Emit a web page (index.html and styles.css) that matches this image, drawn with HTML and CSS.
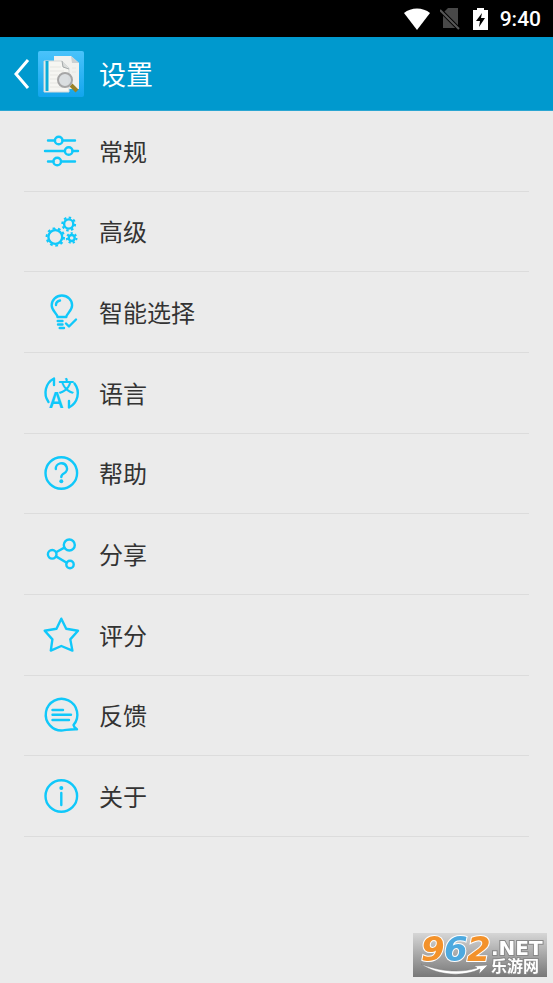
FILE: index.html
```html
<!DOCTYPE html>
<html lang="zh-CN">
<head>
<meta charset="utf-8">
<meta name="viewport" content="width=device-width, initial-scale=1">
<title>设置</title>
<link rel="stylesheet" href="styles.css">
</head>
<body>
<div class="status-bar">
  <svg class="wifi" viewBox="0 0 28 22" aria-hidden="true"><path d="M1 5C8-1 20-1 27 5L14 22Z" fill="#fff"/></svg>
  <svg class="sim" viewBox="0 0 20 22" aria-hidden="true"><path d="M8 0H18V20H3V5Z" fill="#484848"/><path d="M0 2L19 21" stroke="#000" stroke-width="4"/><path d="M0 2L19 21" stroke="#585858" stroke-width="2"/></svg>
  <svg class="battery" viewBox="0 0 15 22" aria-hidden="true"><path d="M0 2H4V0H11V2H15V22H0Z" fill="#fff"/><path d="M9 5L3 13H7L6 19L12 10H8Z" fill="#000"/></svg>
  <span class="time">9:40</span>
</div>
<header class="app-bar">
  <a class="back" href="#" aria-label="返回">
    <svg class="chevron" viewBox="0 0 16 30" aria-hidden="true"><path d="M14 1L2 15L14 29" fill="none" stroke="#fff" stroke-width="3"/></svg>
    <svg class="logo" viewBox="0 0 46 46" aria-hidden="true">
      <defs><linearGradient id="tile" x2="0" y2="1"><stop stop-color="#4ac3fb"/><stop offset="1" stop-color="#12a5ed"/></linearGradient></defs>
      <rect width="46" height="46" rx="2" fill="url(#tile)"/>
      <path d="M16 5H33L41 12V38H16Z" fill="#f1f1ee"/>
      <path d="M33 5L34 12H41Z" fill="#cbd0d2"/>
      <path d="M6 10H24L31 17V41H6Z" fill="#f6f6f2" stroke="#d5d9d9"/>
      <path d="M9 10V40" stroke="#0aacd8" stroke-width="3"/>
      <path d="M24 10L25 16L31 18" fill="#d8dad8" stroke="#a5aaaa"/>
      <path d="M12 16H23M12 20H26M12 24H20M12 28H20M12 32H22M12 36H27M34 17H38M34 21H38" stroke="#e6e6e2"/>
      <path d="M33 34L39 40" stroke="#9a8226" stroke-width="4"/>
      <circle cx="27" cy="29" r="7" fill="#d5d9dd" fill-opacity=".85" stroke="#a6a6a6" stroke-width="2"/>
    </svg>
  </a>
  <h1 class="title">设置</h1>
</header>
<main>
  <ul class="menu">
    <li><a href="#"><svg viewBox="0 0 40 40" aria-hidden="true"><path d="M7 9.500H14M21.500 9.500H34M4 20H24M31.500 20H37M7 30.500H12.500M20 30.500H34"/><circle cx="17.700" cy="9.500" r="3.800"/><circle cx="27.700" cy="20" r="3.800"/><circle cx="16.200" cy="30.500" r="3.800"/></svg><span>常规</span></a></li>
    <li><a href="#"><svg viewBox="0 0 40 40" aria-hidden="true"><circle cx="14.300" cy="26" r="6.900"/><circle class="teeth" cx="14.300" cy="26" r="8.700" pathLength="20"/><circle cx="27.700" cy="13" r="4.600"/><circle class="teeth" cx="27.700" cy="13" r="6.400" pathLength="16"/><circle cx="30.700" cy="27" r="3"/><circle class="teeth" cx="30.700" cy="27" r="4.800" pathLength="14"/></svg><span>高级</span></a></li>
    <li><a href="#"><svg viewBox="0 0 40 40" aria-hidden="true"><path d="M16.500 25C16 21 10.700 19 10.700 13.200A10.200 9.700 0 0 1 31.100 13.200C31.100 19 25.800 21 25.300 25ZM15 13C15 10.500 16.500 9 19 8.500M16.700 29H21.500M17 32.500H21.500M18.700 36H23M25 31.500L28 34.500L35 27.500"/></svg><span>智能选择</span></a></li>
    <li><a href="#"><svg viewBox="0 0 40 40" aria-hidden="true"><path d="M13 12V5.500A16 16 0 0 0 7.500 29M33.500 10.500A16 16 0 0 1 28 34.500V28"/><text class="cjk" x="17" y="19">文</text><text class="latin" x="8" y="35">A</text></svg><span>语言</span></a></li>
    <li><a href="#"><svg viewBox="0 0 40 40" aria-hidden="true"><circle cx="20.300" cy="20" r="15.800"/><path d="M14.800 16A5.600 5.300 0 1 1 23.200 20.200C21.200 21.300 20.300 22 20.300 24"/><circle class="dot" cx="20.300" cy="28.200" r="2"/></svg><span>帮助</span></a></li>
    <li><a href="#"><svg viewBox="0 0 40 40" aria-hidden="true"><circle cx="28.300" cy="11" r="5.500"/><circle cx="11.200" cy="20.300" r="4.300"/><circle cx="29" cy="30.500" r="3.700"/><path d="M15 18.200L23.400 13.600M15 22.400L25.700 28.700"/></svg><span>分享</span></a></li>
    <li><a href="#"><svg viewBox="0 0 40 40" aria-hidden="true"><path d="M20.300 3.700L25.200 13.700L37 15.700L29.300 24.400L31.400 35.600L20.300 31L9.800 35.600L11.400 24.400L3.700 15.700L15.500 13.700Z"/></svg><span>评分</span></a></li>
    <li><a href="#"><svg viewBox="0 0 40 40" aria-hidden="true"><path d="M32.500 30A15.800 15.800 0 1 0 22 35.400C26 35 29 34 36 34.200C34 33 32.800 32 32.500 30ZM11.500 15H22M11.500 19.800H30M11.500 25H28"/></svg><span>反馈</span></a></li>
    <li><a href="#"><svg viewBox="0 0 40 40" aria-hidden="true"><circle cx="20.300" cy="20" r="15.800"/><path d="M20.300 17V29"/><circle class="dot" cx="20.300" cy="12" r="2"/></svg><span>关于</span></a></li>
  </ul>
</main>
<svg class="watermark" viewBox="0 0 134 44" role="img" aria-label="962.NET 乐游网">
  <defs><linearGradient id="plate" x2="0" y2="1"><stop stop-color="#d6d6d6"/><stop offset="1" stop-color="#787878"/></linearGradient></defs>
  <rect width="134" height="44" fill="url(#plate)"/>
  <path d="M8 31C25 43 51 44 67 36L66 41L75 32L61 33L64 35C48 40 28 39 8 31Z" fill="#fff" stroke="#777" stroke-width=".5"/>
  <g class="digits"><text x="8" y="28" fill="#f3922b">9</text><text x="31" y="28" fill="#4da9df">6</text><text x="54" y="28" fill="#f3922b">2</text></g>
  <text class="net" x="78" y="22">.NET</text>
  <text class="site" x="78" y="39">乐游网</text>
</svg>
</body>
</html>
```
FILE: styles.css
```css
* {
  box-sizing: border-box;
}

body {
  margin: 0;
  min-height: 100vh;
  background: #ebebeb;
  color: #333;
  font-family: "Noto Sans", "Noto Sans CJK SC", sans-serif;
}

a {
  color: inherit;
  text-decoration: none;
}

.status-bar {
  display: flex;
  align-items: center;
  justify-content: flex-end;
  height: 37px;
  padding-right: 12px;
  background: #000;
  color: #fff;
}

.status-bar svg {
  height: 22px;
}

.wifi {
  width: 28px;
}

.sim {
  width: 20px;
  margin-left: 9px;
}

.battery {
  width: 15px;
  margin-left: 13px;
}

.time {
  margin-left: 12px;
  font-family: Roboto, sans-serif;
  font-size: 21px;
  font-weight: 500;
  line-height: 24px;
}

.app-bar {
  display: flex;
  align-items: center;
  gap: 15px;
  height: 74px;
  padding-left: 14px;
  background: #0099ce;
  border-bottom: 1px solid #2aa6d2;
  color: #fff;
}

.back {
  display: flex;
  align-items: center;
  gap: 8px;
}

.chevron {
  width: 16px;
  height: 30px;
}

.logo {
  width: 46px;
  height: 46px;
}

.title {
  margin: 0;
  font-family: "Noto Sans CJK SC", sans-serif;
  font-size: 27px;
  font-weight: 400;
  line-height: 40px;
}

.menu {
  display: grid;
  grid-auto-rows: 1fr;
  min-height: 726px;
  margin: 0;
  padding: 0 24px;
  list-style: none;
}

.menu li {
  display: grid;
  border-bottom: 1px solid #dcdcdc;
}

.menu a {
  display: flex;
  align-items: center;
  gap: 18px;
  padding-left: 17px;
  font-family: "Noto Sans CJK SC", sans-serif;
  font-size: 24px;
  line-height: 36px;
}

.menu svg {
  width: 40px;
  height: 40px;
  fill: none;
  stroke: #10c8fa;
  stroke-width: 2.4;
  stroke-linecap: round;
  stroke-linejoin: round;
}

.menu .teeth {
  stroke-width: 2;
  stroke-linecap: butt;
  stroke-dasharray: 1 1;
}

.menu .dot,
.menu text {
  fill: #10c8fa;
  stroke: none;
}

.cjk {
  font: 700 16px "Noto Sans CJK SC", sans-serif;
}

.latin {
  font: 600 21px "Noto Sans", sans-serif;
}

.watermark {
  position: fixed;
  right: 6px;
  bottom: 6px;
  width: 134px;
  height: 44px;
  overflow: visible;
}

.watermark text {
  paint-order: stroke;
  stroke: #fff;
  stroke-width: 2;
}

.digits {
  font: italic 700 34px "DejaVu Sans", sans-serif;
}

.watermark .net,
.watermark .site {
  fill: #fff;
  stroke: #888;
}

.net {
  font: 700 20px "DejaVu Sans", sans-serif;
}

.site {
  font: 700 16px "Noto Sans CJK SC", sans-serif;
}
```
